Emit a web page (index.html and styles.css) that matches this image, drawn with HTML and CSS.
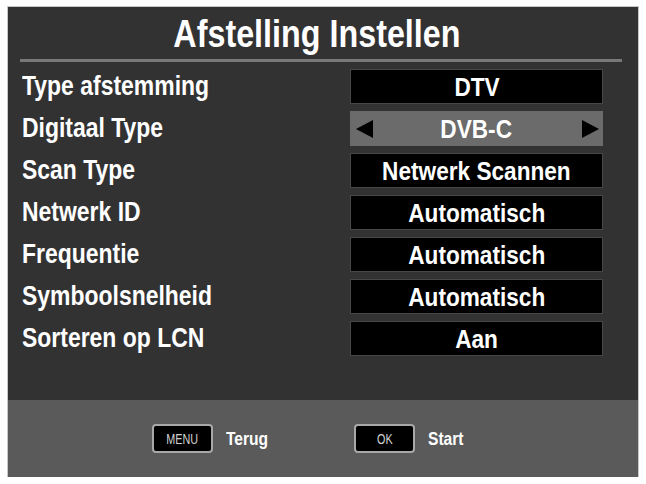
FILE: index.html
```html
<!DOCTYPE html>
<html lang="nl">
<head>
<meta charset="utf-8">
<title>Afstelling Instellen</title>
<link rel="stylesheet" href="styles.css">
</head>
<body>
<div class="screen">
  <div class="title"><span class="nt">Afstelling Instellen</span></div>
  <div class="rule"></div>
  <div class="rows">
    <div class="row"><div class="label"><span class="nt">Type afstemming</span></div><div class="value"><span class="nt">DTV</span></div></div>
    <div class="row"><div class="label"><span class="nt">Digitaal Type</span></div><div class="value selected"><span class="arrow left"></span><span class="nt">DVB-C</span><span class="arrow right"></span></div></div>
    <div class="row"><div class="label"><span class="nt">Scan Type</span></div><div class="value"><span class="nt">Netwerk Scannen</span></div></div>
    <div class="row"><div class="label"><span class="nt">Netwerk ID</span></div><div class="value"><span class="nt">Automatisch</span></div></div>
    <div class="row"><div class="label"><span class="nt">Frequentie</span></div><div class="value"><span class="nt">Automatisch</span></div></div>
    <div class="row"><div class="label"><span class="nt">Symboolsnelheid</span></div><div class="value"><span class="nt">Automatisch</span></div></div>
    <div class="row"><div class="label"><span class="nt">Sorteren op LCN</span></div><div class="value"><span class="nt">Aan</span></div></div>
  </div>
  <div class="footer">
    <div class="hint"><span class="key"><span class="kt">MENU</span></span><span class="hlabel"><span class="nt">Terug</span></span></div>
    <div class="hint"><span class="key"><span class="kt">OK</span></span><span class="hlabel"><span class="nt">Start</span></span></div>
  </div>
</div>
</body>
</html>
```
FILE: styles.css
```css
html, body {
  margin: 0;
  padding: 0;
  background: #ffffff;
}
body {
  font-family: "Liberation Sans", Arial, sans-serif;
  font-weight: bold;
  color: #ffffff;
}
.nt {
  display: inline-block;
  white-space: nowrap;
  transform: scaleX(0.85);
  transform-origin: center center;
}
.screen {
  margin: 7px 0 0 8px;
  width: 630px;
  height: 470px;
  background: #323232;
  box-shadow: 0 0 0 1px #c8c8c8;
  display: flex;
  flex-direction: column;
}
.title {
  height: 52px;
  display: flex;
  align-items: center;
  justify-content: center;
  padding-right: 12px;
  font-size: 38px;
  line-height: 1;
  padding-top: 2px;
  box-sizing: border-box;
}
.rule {
  height: 3px;
  margin: 0 16px 0 12px;
  background: #787878;
}
.rows {
  display: flex;
  flex-direction: column;
  gap: 7px;
  padding: 7px 0 0 14px;
  flex: 1;
}
.row {
  display: flex;
  align-items: center;
  height: 35px;
}
.label {
  width: 328px;
  font-size: 27px;
  line-height: 1;
}
.label .nt {
  transform-origin: left center;
}
.value {
  width: 253px;
  height: 35px;
  box-sizing: border-box;
  background: #000000;
  border: 1px solid #474747;
  display: flex;
  align-items: center;
  justify-content: center;
  font-size: 26px;
  line-height: 1;
  position: relative;
}
.value .nt {
  transform: scaleX(0.87);
}
.value.selected {
  background: #6b6b6b;
  border-color: #6b6b6b;
}
.arrow {
  position: absolute;
  top: 8px;
  width: 0;
  height: 0;
  border-top: 9px solid transparent;
  border-bottom: 9px solid transparent;
}
.arrow.left {
  left: 5px;
  border-right: 17px solid #000;
}
.arrow.right {
  right: 3px;
  border-left: 17px solid #000;
}
.footer {
  height: 77px;
  background: #5a5a5a;
  display: flex;
  align-items: center;
  padding-left: 144px;
  gap: 77px;
}
.hint {
  display: flex;
  align-items: center;
  gap: 13px;
}
.key {
  width: 61px;
  height: 29px;
  box-sizing: border-box;
  background: #000;
  border: 2px solid #a8a8a8;
  border-radius: 4px;
  display: flex;
  align-items: center;
  justify-content: center;
}
.kt {
  display: inline-block;
  font-weight: normal;
  font-size: 15px;
  line-height: 1;
  color: #d2d2d2;
  transform: scaleX(0.72);
}
.hlabel {
  font-size: 19px;
  line-height: 1;
}
.hlabel .nt {
  transform-origin: left center;
  transform: scaleX(0.82);
}
```
